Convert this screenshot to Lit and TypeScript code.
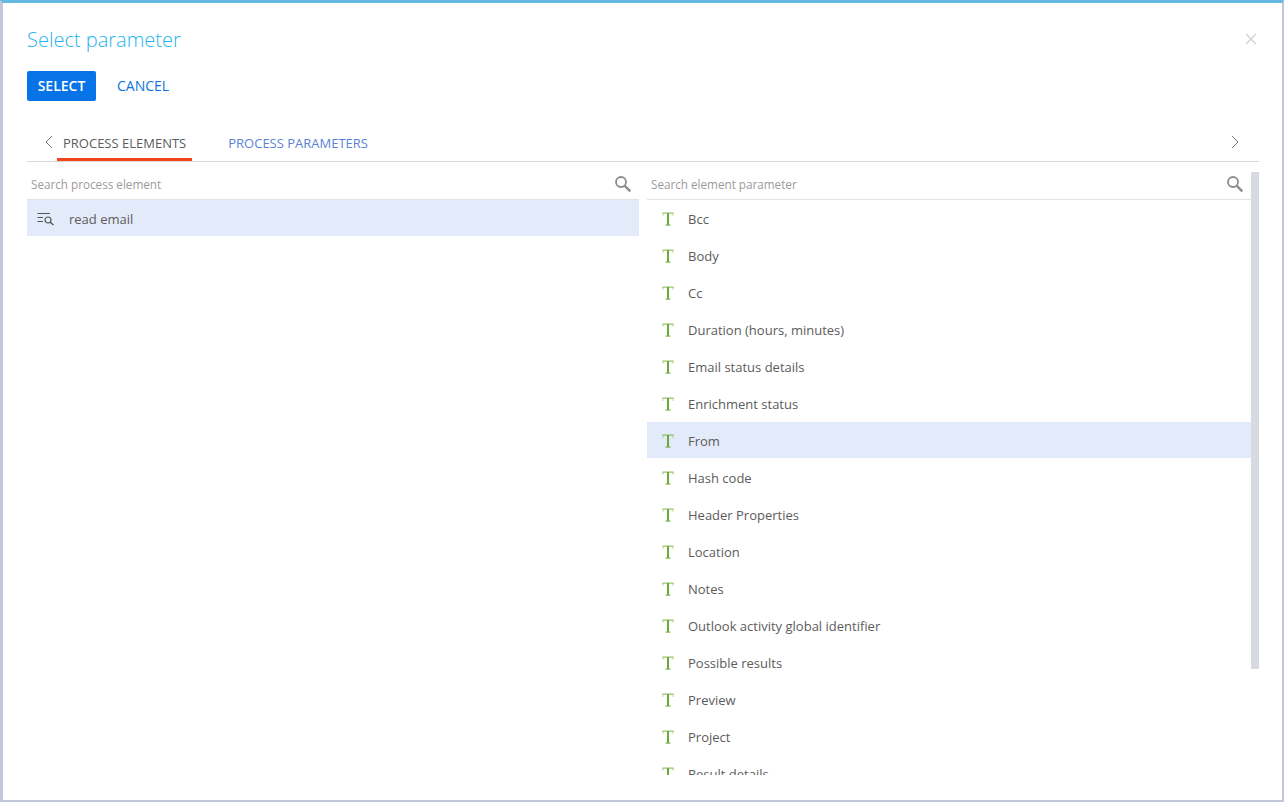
import { LitElement, html, css, svg } from "lit";
import { customElement } from "lit/decorators.js";

const PARAMS = [
  "Bcc", "Body", "Cc", "Duration (hours, minutes)", "Email status details", "Enrichment status",
  "From", "Hash code", "Header Properties", "Location", "Notes",
  "Outlook activity global identifier", "Possible results", "Preview", "Project", "Result details",
];

const searchIcon = svg`<svg class="search-icon" width="18" height="18" viewBox="0 0 18 18" fill="none" stroke="#8c8c8c">
  <circle cx="7" cy="7" r="5" stroke-width="1.8"/><path d="M10.8 10.8 L16.3 16.3" stroke-width="2.4"/></svg>`;

const textIcon = svg`<svg class="type-icon" width="12" height="14" viewBox="0 0 12 14" fill="#6bab35">
  <rect x="0.5" y="0.5" width="11" height="1.2" opacity="0.75"/>
  <rect x="0.5" y="1" width="1" height="3" opacity="0.45"/><rect x="10.5" y="1" width="1" height="3" opacity="0.45"/>
  <rect x="5" y="1" width="2" height="12"/><rect x="3.5" y="12.6" width="5" height="1"/></svg>`;

@customElement("app-root")
export class AppRoot extends LitElement {
  static styles = css`
    :host {
      display: block;
      width: 1284px;
      height: 802px;
      overflow: hidden;
      box-sizing: border-box;
      background: #fff;
      border-top: 3px solid #66b8e4;
      border-left: 3px solid #c1c6d8;
      border-right: 2px solid #c1c6d8;
      border-bottom: 2px solid #c1c6d8;
      font-family: "Open Sans", sans-serif;
      font-size: 13px;
      color: #5c5c5c;
    }
    .dialog {
      position: relative;
      height: 100%;
      padding: 0 23px 0 24px;
      box-sizing: border-box;
    }
    .title {
      padding-top: 23px;
      box-sizing: border-box;
      height: 68px;
      font-size: 20px;
      font-weight: 300;
      line-height: 28px;
      color: #1fb5ef;
    }
    .close {
      position: absolute;
      top: 30px;
      right: 25px;
    }
    .actions {
      display: flex;
      align-items: center;
      gap: 21px;
    }
    .btn {
      height: 30px;
      line-height: 30px;
      font-size: 14px;
      box-sizing: border-box;
    }
    .btn.primary {
      width: 69px;
      text-align: center;
      background: #0673e6;
      color: #fff;
      border-radius: 2px;
      font-weight: 600;
    }
    .btn.link {
      color: #0d74e3;
    }
    .tabs {
      display: flex;
      align-items: center;
      height: 38px;
      margin-top: 22px;
      border-bottom: 1px solid #d9d9d9;
    }
    .prev {
      display: flex;
      width: 30px;
      box-sizing: border-box;
      padding-left: 14px;
      justify-content: center;
    }
    .next {
      display: flex;
      margin-left: auto;
      width: 49px;
      justify-content: center;
    }
    .tab {
      height: 38px;
      line-height: 40px;
      padding: 0 6px;
      box-sizing: border-box;
      white-space: nowrap;
    }
    .tab.active {
      box-shadow: inset 0 -3px 0 #f2451c;
    }
    .tab.other {
      margin-left: 30px;
      color: #5b82d6;
    }
    .panes {
      display: grid;
      grid-template-columns: 612px 612px;
      gap: 8px;
    }
    .search {
      display: flex;
      align-items: center;
      justify-content: space-between;
      height: 38px;
      box-sizing: border-box;
      border-bottom: 1px solid #e2e2e2;
      padding: 7px 7px 0 4px;
      font-size: 11.7px;
      color: #9b9b9b;
    }
    .row {
      display: flex;
      align-items: center;
      height: 37px;
      box-sizing: border-box;
      white-space: nowrap;
    }
    .row.selected {
      background: #e3eaf9;
    }
    .left .row {
      padding: 1px 0 0 10px;
      height: 36px;
    }
    .left .row span {
      margin-left: 14px;
    }
    .right {
      position: relative;
      padding-right: 8px;
      height: 613px;
      overflow: hidden;
      box-sizing: border-box;
    }
    .right .row {
      padding-left: 15px;
    }
    .right .row.selected {
      height: 36px;
      margin-bottom: 1px;
      padding-top: 1px;
    }
    .type-icon {
      flex: none;
      margin-right: 14px;
    }
    .thumb {
      position: absolute;
      top: 10px;
      right: 0;
      width: 8px;
      height: 497px;
      background: #d8dae1;
    }
  `;

  render() {
    return html`
      <div class="dialog">
        <div class="title">Select parameter</div>
        <svg class="close" width="12" height="12" viewBox="0 0 12 12" stroke="#cfcfcf" stroke-width="1.2">
          <path d="M1 1 L11 11 M11 1 L1 11"/>
        </svg>
        <div class="actions">
          <div class="btn primary">SELECT</div>
          <div class="btn link">CANCEL</div>
        </div>
        <div class="tabs">
          <div class="prev">
            <svg width="10" height="14" viewBox="0 0 10 14" fill="none" stroke="#777"><path d="M8 1 L2 7 L8 13"/></svg>
          </div>
          <div class="tab active">PROCESS ELEMENTS</div>
          <div class="tab other">PROCESS PARAMETERS</div>
          <div class="next">
            <svg width="10" height="14" viewBox="0 0 10 14" fill="none" stroke="#777"><path d="M2 1 L8 7 L2 13"/></svg>
          </div>
        </div>
        <div class="panes">
          <div class="left">
            <div class="search"><span>Search process element</span>${searchIcon}</div>
            <div class="row selected">
              <svg width="18" height="14" viewBox="0 0 18 14" fill="none" stroke="#555">
                <path d="M0.5 1.5 H13 M0.5 5.5 H6 M0.5 9.5 H6" stroke-width="1"/>
                <circle cx="11" cy="8" r="3" stroke-width="1.2"/>
                <path d="M13.2 10.2 L16.5 13" stroke-width="1.4"/>
              </svg>
              <span>read email</span>
            </div>
          </div>
          <div class="right">
            <div class="search"><span>Search element parameter</span>${searchIcon}</div>
            ${PARAMS.map(p => html`
              <div class="row ${p === "From" ? "selected" : ""}">${textIcon}<span>${p}</span></div>
            `)}
            <div class="thumb"></div>
          </div>
        </div>
      </div>
    `;
  }
}
